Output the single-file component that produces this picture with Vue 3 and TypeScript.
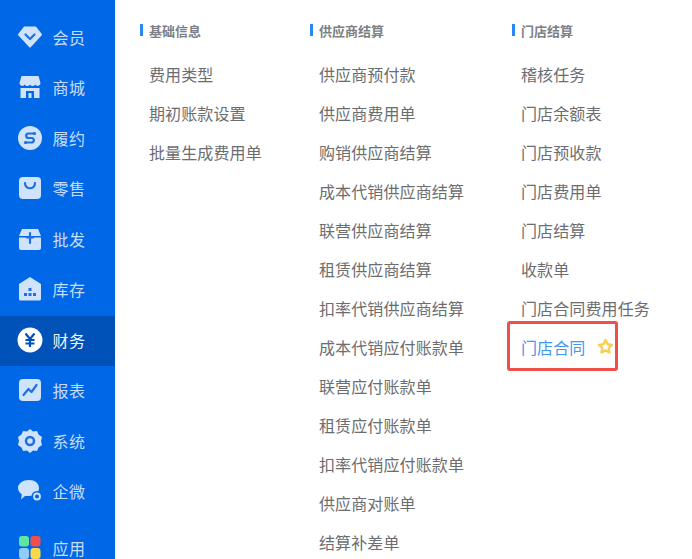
<script setup lang="ts">
interface NavItem { label: string; icon: string; active?: boolean; last?: boolean }
const nav: NavItem[] = [
  { label: '会员', icon: 'vip' },
  { label: '商城', icon: 'shop' },
  { label: '履约', icon: 'swap' },
  { label: '零售', icon: 'bag' },
  { label: '批发', icon: 'box' },
  { label: '库存', icon: 'house' },
  { label: '财务', icon: 'yen', active: true },
  { label: '报表', icon: 'chart' },
  { label: '系统', icon: 'gear' },
  { label: '企微', icon: 'chat' },
  { label: '应用', icon: 'apps', last: true },
]
const columns = [
  { cls: 'col-a', title: '基础信息', items: ['费用类型', '期初账款设置', '批量生成费用单'] },
  { cls: 'col-b', title: '供应商结算', items: ['供应商预付款', '供应商费用单', '购销供应商结算', '成本代销供应商结算', '联营供应商结算', '租赁供应商结算', '扣率代销供应商结算', '成本代销应付账款单', '联营应付账款单', '租赁应付账款单', '扣率代销应付账款单', '供应商对账单', '结算补差单'] },
  { cls: 'col-c', title: '门店结算', items: ['稽核任务', '门店余额表', '门店预收款', '门店费用单', '门店结算', '收款单', '门店合同费用任务', '门店合同'] },
]
</script>

<template>
  <div class="page">
    <aside class="side">
      <div v-for="n in nav" :key="n.label" class="nav" :class="{ active: n.active, last: n.last }">
        <svg class="ico" viewBox="0 0 24 24">
          <template v-if="n.icon === 'vip'">
            <path d="M6.500 2.500h11L23 9.500 12 21.500 1 9.500z" class="f" stroke="#cfe3fd" stroke-width="2" stroke-linejoin="round" />
            <path d="M7.500 9.500l4.500 4.500 4.500-4.500" class="s" />
          </template>
          <template v-else-if="n.icon === 'shop'">
            <path d="M3.500 1h17l2 7a2.800 2.800 0 0 1-5.200 1.500 3 3 0 0 1-5.300 0 3 3 0 0 1-5.300 0A2.800 2.800 0 0 1 1.500 8z" class="f" />
            <path d="M2.500 13h5.500v10H2.500zM16 13h5.500v10H16zM8 13h8v3H8z" class="f" />
            <path d="M10.500 18h3v5h-3z" class="f" />
          </template>
          <template v-else-if="n.icon === 'swap'">
            <circle cx="12" cy="12" r="12" class="f" />
            <path d="M16 7.500H10a2.300 2.300 0 0 0 0 4.500h4a2.300 2.300 0 0 1 0 4.500H8" class="s" />
            <circle cx="16.500" cy="7.500" r="1.600" class="d" />
            <circle cx="7.500" cy="16.500" r="1.600" class="d" />
          </template>
          <template v-else-if="n.icon === 'bag'">
            <rect x="1" y="1" width="22" height="22" rx="4" class="f" />
            <path d="M7 7c0 7 10 7 10 0" class="s" />
          </template>
          <template v-else-if="n.icon === 'box'">
            <path d="M4 2h16l3 7H1z" class="f" />
            <path d="M1 10.500h22V21a2 2 0 0 1-2 2H3a2 2 0 0 1-2-2z" class="f" />
            <path d="M12 6v10M9 10.500h6" class="s" />
          </template>
          <template v-else-if="n.icon === 'house'">
            <path d="M12 0l11 7v15a1.500 1.500 0 0 1-1.500 1.500h-19A1.500 1.500 0 0 1 1 22V7z" class="f" />
            <path d="M10.500 11h3v3h-3zM6 16h3v3H6zM10.500 16h3v3h-3zM15 16h3v3h-3z" class="d" />
          </template>
          <template v-else-if="n.icon === 'yen'">
            <circle cx="12" cy="12" r="12.500" class="w" />
            <path d="M7.500 5.500L12 11l4.500-5.500M12 11v8M7.500 12h9M7.500 15.500h9" class="y" />
          </template>
          <template v-else-if="n.icon === 'chart'">
            <rect x="1" y="1" width="22" height="22" rx="4" class="f" />
            <path d="M5.500 17l5-6 3 3 5-7" class="s" />
          </template>
          <template v-else-if="n.icon === 'gear'">
            <path d="M12 0l3 2.500 4-.5 1.500 3.500L24 8l-1 4 1 4-3.500 2.500L19 22l-4-.5L12 24l-3-2.500-4 .5-1.500-3.500L0 16l1-4-1-4 3.500-2.500L5 2l4 .5z" class="f" stroke-linejoin="round" />
            <circle cx="12" cy="12" r="4" fill="none" stroke="#1f6fe0" stroke-width="2.500" />
          </template>
          <template v-else-if="n.icon === 'chat'">
            <path d="M11 1c6 0 10 3.500 10 8 0 5-4 8-10 8H7l-4 3.500.8-5C1.500 13.500 0 11.500 0 9c0-4.500 5-8 11-8z" class="f" />
            <circle cx="19" cy="17.500" r="5.500" fill="#0068e6" />
            <circle cx="19" cy="17.500" r="3" fill="none" stroke="#cfe3fd" stroke-width="1.800" />
          </template>
          <template v-else>
            <rect x="1" y="0" width="10" height="10.500" rx="3" fill="#5fe6a0" />
            <rect x="12.500" y="0" width="10" height="10.500" rx="3" fill="#ef4f4f" />
            <rect x="1" y="12" width="10" height="11" rx="3" fill="#8fcbfb" />
            <rect x="12.500" y="12" width="10" height="11" rx="3" fill="#fbd84a" />
          </template>
        </svg>
        <span class="lbl">{{ n.label }}</span>
      </div>
    </aside>
    <main class="panel">
      <section v-for="c in columns" :key="c.title" class="col" :class="c.cls">
        <h3 class="head">{{ c.title }}</h3>
        <div v-for="it in c.items" :key="it" class="item" :class="{ hl: it === '门店合同' }">
          <span>{{ it }}</span>
          <template v-if="it === '门店合同'">
            <svg class="star" viewBox="0 0 24 24"><path d="M12 3l2.800 5.900 6.400.8-4.700 4.400 1.200 6.400L12 17.400l-5.700 3.100 1.200-6.400-4.700-4.400 6.400-.8z" fill="#fff" stroke="#f8cf55" stroke-width="3.400" stroke-linejoin="round" /></svg>
            <i class="mark"></i>
          </template>
        </div>
      </section>
    </main>
  </div>
</template>

<style>
html, body { margin: 0; overflow: hidden; background: #fff; }
</style>

<style scoped>
.page {
  display: flex;
  width: 692px;
  height: 559px;
  overflow: hidden;
  background: #fff;
  font-family: "Noto Sans CJK SC", "Liberation Sans", sans-serif;
}
.side {
  flex: none;
  width: 115px;
  height: 559px;
  background: #0068e6;
  padding-top: 12.500px;
  box-sizing: border-box;
  overflow: hidden;
}
.nav {
  display: flex;
  align-items: center;
  height: 50.500px;
  padding-left: 18px;
  padding-bottom: 2px;
  box-sizing: border-box;
  color: #c6dcfb;
}
.nav.active { background: #0052b8; color: #f0f6ff; }
.nav.last { margin-top: 6px; }
.ico { width: 24px; height: 24px; flex: none; overflow: visible; }
.f { fill: #cfe3fd; }
.w { fill: #fff; }
.s { fill: none; stroke: #1f6fe0; stroke-width: 2.200; stroke-linecap: round; stroke-linejoin: round; }
.d { fill: #1f6fe0; }
.y { fill: none; stroke: #0052b8; stroke-width: 2.200; }
.lbl { margin-left: 10.500px; font-size: 16px; line-height: 20px; letter-spacing: 0.400px; }
.panel { display: flex; flex: 1; align-items: flex-start; padding-top: 21px; }
.col { flex: none; }
.col-a { width: 170px; margin-left: 25px; }
.col-b { width: 202px; }
.head {
  margin: 0 0 14px;
  height: 19px;
  line-height: 19px;
  font-size: 13px;
  font-weight: 700;
  color: #7c7f85;
  padding-left: 9px;
  position: relative;
}
.head::before {
  content: "";
  position: absolute;
  left: 0;
  top: 3px;
  width: 3px;
  height: 12px;
  background: #2b87f2;
}
.item {
  position: relative;
  display: flex;
  align-items: center;
  height: 39px;
  padding-left: 9px;
  font-size: 16px;
  letter-spacing: 0.120px;
  color: #6b6d70;
  white-space: nowrap;
}
.hl { color: #3f97f0; }
.star { width: 17px; height: 17px; margin-left: 12px; flex: none; }
.mark {
  position: absolute;
  left: -5px;
  top: -6px;
  width: 111px;
  height: 50px;
  box-sizing: border-box;
  border: 3px solid #ee5049;
  border-radius: 3px;
  pointer-events: none;
}
</style>
